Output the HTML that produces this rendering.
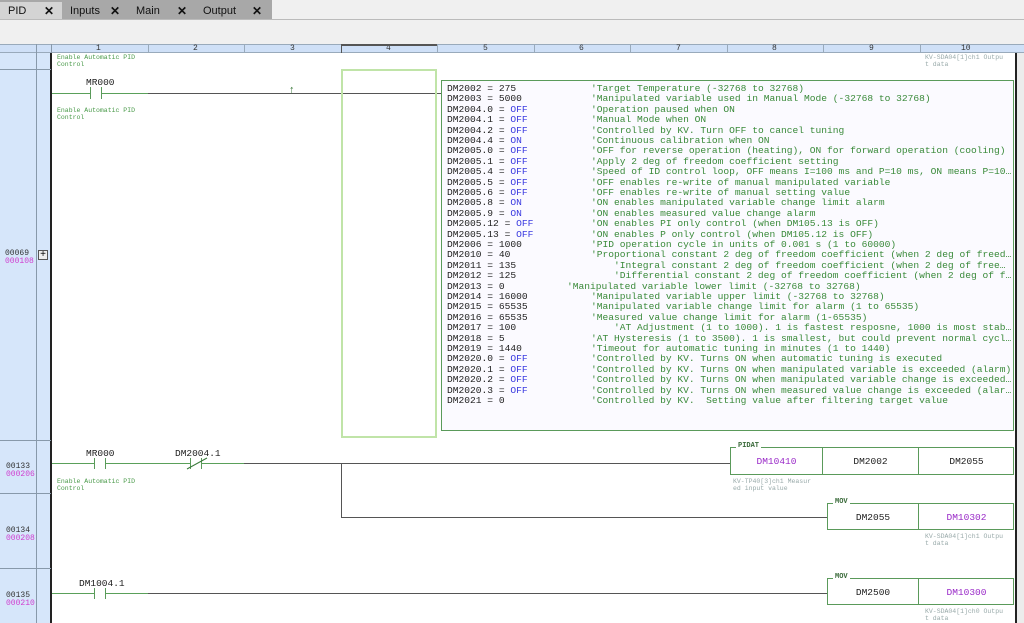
<!DOCTYPE html>
<html><head><meta charset="utf-8"><style>
*{margin:0;padding:0;box-sizing:border-box}
body{width:1024px;height:623px;overflow:hidden;background:#f0f0f0;position:relative;font-family:"Liberation Sans",sans-serif}
.a{position:absolute}
.tab{position:absolute;top:2px;height:18px;font-size:11px;line-height:18px;color:#111;padding-left:8px}
.tab b{position:absolute;right:8px;top:0;font-size:12px}
.mono{font-family:"Liberation Mono",monospace}
.hl{position:absolute;height:1px;background:#555}
.vl{position:absolute;width:1px;background:#555}
.g{background:#5aa05a}
.cmt{position:absolute;font-family:"Liberation Mono",monospace;font-size:6.5px;line-height:7px;color:#4a9a4a}
.gc{color:#9aa;}
.lbl{position:absolute;font-family:"Liberation Mono",monospace;font-size:9.5px;color:#222}
.box{position:absolute;border:1px solid #5a9a5a;background:#fff}
.cell{position:absolute;top:0;bottom:0;border-right:1px solid #5a9a5a;font-family:"Liberation Mono",monospace;font-size:9.5px;text-align:center;color:#222}
.L{position:absolute;left:5px;white-space:pre;font-family:"Liberation Mono",monospace;font-size:9.6px;line-height:10.4px;color:#222}
.C{position:absolute;white-space:pre;font-family:"Liberation Mono",monospace;font-size:9.6px;line-height:10.4px;color:#3a8a3a}
.b{color:#3a3ae0}
</style></head><body>
<!-- tabs -->
<div class="a" style="left:0;top:0;width:272px;height:20px;background:#a8a8a8"></div>
<div class="tab" style="left:0;width:62px;background:#d4d4d4">PID<b>✕</b></div>
<div class="tab" style="left:62px;width:66px">Inputs<b>✕</b></div>
<div class="tab" style="left:128px;width:67px">Main<b>✕</b></div>
<div class="tab" style="left:195px;width:75px">Output<b>✕</b></div>
<div class="a" style="left:0;top:19px;width:1024px;height:1px;background:#bbb"></div>
<!-- header -->
<div class="a" style="left:0;top:44px;width:1024px;height:9px;background:#cfe0f7;border-top:1px solid #9ab;border-bottom:1px solid #9ab"></div>
<div class="a" style="left:0;top:53px;width:51px;height:570px;background:#d6e6fa"></div>
<div class="vl" style="left:36px;top:44px;height:579px;background:#8899aa"></div>
<div class="vl" style="left:51px;top:44px;height:9px;background:#8899aa"></div>
<div class="a" style="left:51px;top:53px;width:965px;height:570px;background:#fff"></div>
<div class="a" style="left:1017px;top:53px;width:7px;height:570px;background:#ececec"></div>
<div class="a" style="left:50px;top:53px;width:2px;height:570px;background:#222"></div>
<div class="a" style="left:1015px;top:53px;width:2px;height:570px;background:#222"></div>
<div class="a mono" style="left:51px;top:44px;width:965px;height:9px;font-size:8px;line-height:9px;color:#333">
<span class="a" style="left:45px">1</span><span class="a" style="left:142px">2</span><span class="a" style="left:239px">3</span><span class="a" style="left:335px">4</span><span class="a" style="left:432px">5</span><span class="a" style="left:528px">6</span><span class="a" style="left:625px">7</span><span class="a" style="left:721px">8</span><span class="a" style="left:818px">9</span><span class="a" style="left:910px">10</span>
</div>
<div class="vl" style="left:148px;top:44px;height:9px;background:#9ab"></div>
<div class="vl" style="left:244px;top:44px;height:9px;background:#9ab"></div>
<div class="vl" style="left:341px;top:44px;height:9px;background:#555"></div>
<div class="vl" style="left:437px;top:44px;height:9px;background:#9ab"></div>
<div class="vl" style="left:534px;top:44px;height:9px;background:#9ab"></div>
<div class="vl" style="left:630px;top:44px;height:9px;background:#9ab"></div>
<div class="vl" style="left:727px;top:44px;height:9px;background:#9ab"></div>
<div class="vl" style="left:823px;top:44px;height:9px;background:#9ab"></div>
<div class="vl" style="left:920px;top:44px;height:9px;background:#9ab"></div>
<div class="a" style="left:341px;top:44px;width:96px;height:2px;background:#555"></div>
<div class="hl" style="left:0;top:69px;width:51px;background:#8899aa"></div>
<div class="hl" style="left:0;top:440px;width:51px;background:#8899aa"></div>
<div class="hl" style="left:0;top:493px;width:51px;background:#8899aa"></div>
<div class="hl" style="left:0;top:568px;width:51px;background:#8899aa"></div>
<!-- row numbers -->
<div class="a mono" style="left:5px;top:250px;font-size:8px;line-height:8px;color:#333">00069<br><span style="color:#d040d0">000108</span></div>
<div class="a" style="left:38px;top:250px;width:10px;height:10px;border:1px solid #555;background:#eee;font-size:10px;line-height:8px;text-align:center">+</div>
<div class="a mono" style="left:6px;top:463px;font-size:8px;line-height:8px;color:#333">00133<br><span style="color:#d040d0">000206</span></div>
<div class="a mono" style="left:6px;top:527px;font-size:8px;line-height:8px;color:#333">00134<br><span style="color:#d040d0">000208</span></div>
<div class="a mono" style="left:6px;top:592px;font-size:8px;line-height:8px;color:#333">00135<br><span style="color:#d040d0">000210</span></div>
<div class="cmt" style="left:57px;top:54px">Enable Automatic PID<br> Control</div>
<div class="cmt gc" style="left:925px;top:54px">KV-SDA04[1]ch1 Outpu<br>t data</div>
<!-- rung 1 -->
<div class="lbl" style="left:86px;top:77px">MR000</div>
<div class="hl g" style="left:52px;top:93px;width:96px"></div>
<div class="hl" style="left:148px;top:93px;width:293px"></div>
<div class="a" style="left:90px;top:87px;width:12px;height:12px;background:#fff;border-left:1px solid #5a9a5a;border-right:1px solid #5a9a5a"></div>
<div class="a" style="left:289px;top:84px;font-size:11px;color:#3a7a3a">↑</div>
<div class="cmt" style="left:57px;top:107px">Enable Automatic PID<br> Control</div>
<div class="a" style="left:341px;top:69px;width:96px;height:369px;border:2px solid #c0e4a8"></div>
<!-- comment box -->
<div class="a" style="left:441px;top:80px;width:573px;height:351px;border:1px solid #5a9a5a;background:#fbfaff;overflow:hidden">
<div class="a" style="left:0;top:3px;width:570px">
<div class="L" style="top:0">DM2002 = 275</div><div class="C" style="left:149px;top:0">'Target Temperature (-32768 to 32768)</div>
<div class="L" style="top:10.4px">DM2003 = 5000</div><div class="C" style="left:149px;top:10.4px">'Manipulated variable used in Manual Mode (-32768 to 32768)</div>
<div class="L" style="top:20.8px">DM2004.0 = <span class="b">OFF</span></div><div class="C" style="left:149px;top:20.8px">'Operation paused when ON</div>
<div class="L" style="top:31.2px">DM2004.1 = <span class="b">OFF</span></div><div class="C" style="left:149px;top:31.2px">'Manual Mode when ON</div>
<div class="L" style="top:41.6px">DM2004.2 = <span class="b">OFF</span></div><div class="C" style="left:149px;top:41.6px">'Controlled by KV. Turn OFF to cancel tuning</div>
<div class="L" style="top:52px">DM2004.4 = <span class="b">ON</span></div><div class="C" style="left:149px;top:52px">'Continuous calibration when ON</div>
<div class="L" style="top:62.4px">DM2005.0 = <span class="b">OFF</span></div><div class="C" style="left:149px;top:62.4px">'OFF for reverse operation (heating), ON for forward operation (cooling)</div>
<div class="L" style="top:72.8px">DM2005.1 = <span class="b">OFF</span></div><div class="C" style="left:149px;top:72.8px">'Apply 2 deg of freedom coefficient setting</div>
<div class="L" style="top:83.2px">DM2005.4 = <span class="b">OFF</span></div><div class="C" style="left:149px;top:83.2px">'Speed of ID control loop, OFF means I=100 ms and P=10 ms, ON means P=10…</div>
<div class="L" style="top:93.6px">DM2005.5 = <span class="b">OFF</span></div><div class="C" style="left:149px;top:93.6px">'OFF enables re-write of manual manipulated variable</div>
<div class="L" style="top:104px">DM2005.6 = <span class="b">OFF</span></div><div class="C" style="left:149px;top:104px">'OFF enables re-write of manual setting value</div>
<div class="L" style="top:114.4px">DM2005.8 = <span class="b">ON</span></div><div class="C" style="left:149px;top:114.4px">'ON enables manipulated variable change limit alarm</div>
<div class="L" style="top:124.8px">DM2005.9 = <span class="b">ON</span></div><div class="C" style="left:149px;top:124.8px">'ON enables measured value change alarm</div>
<div class="L" style="top:135.2px">DM2005.12 = <span class="b">OFF</span></div><div class="C" style="left:149px;top:135.2px">'ON enables PI only control (when DM105.13 is OFF)</div>
<div class="L" style="top:145.6px">DM2005.13 = <span class="b">OFF</span></div><div class="C" style="left:149px;top:145.6px">'ON enables P only control (when DM105.12 is OFF)</div>
<div class="L" style="top:156px">DM2006 = 1000</div><div class="C" style="left:149px;top:156px">'PID operation cycle in units of 0.001 s (1 to 60000)</div>
<div class="L" style="top:166.4px">DM2010 = 40</div><div class="C" style="left:149px;top:166.4px">'Proportional constant 2 deg of freedom coefficient (when 2 deg of freed…</div>
<div class="L" style="top:176.8px">DM2011 = 135</div><div class="C" style="left:172px;top:176.8px">'Integral constant 2 deg of freedom coefficient (when 2 deg of free…</div>
<div class="L" style="top:187.2px">DM2012 = 125</div><div class="C" style="left:172px;top:187.2px">'Differential constant 2 deg of freedom coefficient (when 2 deg of f…</div>
<div class="L" style="top:197.6px">DM2013 = 0</div><div class="C" style="left:125px;top:197.6px">'Manipulated variable lower limit (-32768 to 32768)</div>
<div class="L" style="top:208px">DM2014 = 16000</div><div class="C" style="left:149px;top:208px">'Manipulated variable upper limit (-32768 to 32768)</div>
<div class="L" style="top:218.4px">DM2015 = 65535</div><div class="C" style="left:149px;top:218.4px">'Manipulated variable change limit for alarm (1 to 65535)</div>
<div class="L" style="top:228.8px">DM2016 = 65535</div><div class="C" style="left:149px;top:228.8px">'Measured value change limit for alarm (1-65535)</div>
<div class="L" style="top:239.2px">DM2017 = 100</div><div class="C" style="left:172px;top:239.2px">'AT Adjustment (1 to 1000). 1 is fastest resposne, 1000 is most stab…</div>
<div class="L" style="top:249.6px">DM2018 = 5</div><div class="C" style="left:149px;top:249.6px">'AT Hysteresis (1 to 3500). 1 is smallest, but could prevent normal cycl…</div>
<div class="L" style="top:260px">DM2019 = 1440</div><div class="C" style="left:149px;top:260px">'Timeout for automatic tuning in minutes (1 to 1440)</div>
<div class="L" style="top:270.4px">DM2020.0 = <span class="b">OFF</span></div><div class="C" style="left:149px;top:270.4px">'Controlled by KV. Turns ON when automatic tuning is executed</div>
<div class="L" style="top:280.8px">DM2020.1 = <span class="b">OFF</span></div><div class="C" style="left:149px;top:280.8px">'Controlled by KV. Turns ON when manipulated variable is exceeded (alarm)</div>
<div class="L" style="top:291.2px">DM2020.2 = <span class="b">OFF</span></div><div class="C" style="left:149px;top:291.2px">'Controlled by KV. Turns ON when manipulated variable change is exceeded…</div>
<div class="L" style="top:301.6px">DM2020.3 = <span class="b">OFF</span></div><div class="C" style="left:149px;top:301.6px">'Controlled by KV. Turns ON when measured value change is exceeded (alar…</div>
<div class="L" style="top:312px">DM2021 = 0</div><div class="C" style="left:149px;top:312px">'Controlled by KV.  Setting value after filtering target value</div>
</div></div>
<!-- rung 00133 -->
<div class="lbl" style="left:86px;top:448px">MR000</div>
<div class="lbl" style="left:175px;top:448px">DM2004.1</div>
<div class="hl g" style="left:52px;top:463px;width:192px"></div>
<div class="hl" style="left:244px;top:463px;width:486px"></div>
<div class="a" style="left:94px;top:458px;width:12px;height:11px;background:#fff;border-left:1px solid #5a9a5a;border-right:1px solid #5a9a5a"></div>
<div class="a" style="left:190px;top:458px;width:12px;height:11px;background:#fff;border-left:1px solid #5a9a5a;border-right:1px solid #5a9a5a"></div>
<svg class="a" style="left:185px;top:456px" width="24" height="14"><line x1="2" y1="13" x2="22" y2="2" stroke="#3a7a3a" stroke-width="1"/></svg>
<div class="cmt" style="left:57px;top:478px">Enable Automatic PID<br> Control</div>
<div class="vl" style="left:341px;top:463px;height:55px"></div>
<div class="hl" style="left:341px;top:517px;width:486px"></div>
<!-- PIDAT -->
<div class="box" style="left:730px;top:447px;width:284px;height:28px">
<div class="cell" style="left:0;width:92px;line-height:28px;color:#9a2ac8">DM10410</div>
<div class="cell" style="left:92px;width:96px;line-height:28px">DM2002</div>
<div class="cell" style="left:188px;width:95px;line-height:28px;border-right:none">DM2055</div>
</div>
<div class="a mono" style="left:736px;top:442px;font-size:7px;line-height:9px;background:#fff;padding:0 2px;color:#3a6a3a;font-weight:bold">PIDAT</div>
<div class="cmt gc" style="left:733px;top:478px">KV-TP40[3]ch1 Measur<br>ed input value</div>
<!-- MOV 1 -->
<div class="box" style="left:827px;top:503px;width:187px;height:27px">
<div class="cell" style="left:0;width:91px;line-height:27px">DM2055</div>
<div class="cell" style="left:91px;width:95px;line-height:27px;color:#9a2ac8;border-right:none">DM10302</div>
</div>
<div class="a mono" style="left:833px;top:498px;font-size:7px;line-height:9px;background:#fff;padding:0 2px;color:#3a6a3a;font-weight:bold">MOV</div>
<div class="cmt gc" style="left:925px;top:533px">KV-SDA04[1]ch1 Outpu<br>t data</div>
<!-- rung 00135 -->
<div class="lbl" style="left:79px;top:578px">DM1004.1</div>
<div class="hl g" style="left:52px;top:593px;width:96px"></div>
<div class="hl" style="left:148px;top:593px;width:679px"></div>
<div class="a" style="left:94px;top:588px;width:12px;height:11px;background:#fff;border-left:1px solid #5a9a5a;border-right:1px solid #5a9a5a"></div>
<div class="box" style="left:827px;top:578px;width:187px;height:27px">
<div class="cell" style="left:0;width:91px;line-height:27px">DM2500</div>
<div class="cell" style="left:91px;width:95px;line-height:27px;color:#9a2ac8;border-right:none">DM10300</div>
</div>
<div class="a mono" style="left:833px;top:573px;font-size:7px;line-height:9px;background:#fff;padding:0 2px;color:#3a6a3a;font-weight:bold">MOV</div>
<div class="cmt gc" style="left:925px;top:608px">KV-SDA04[1]ch0 Outpu<br>t data</div>
</body></html>
